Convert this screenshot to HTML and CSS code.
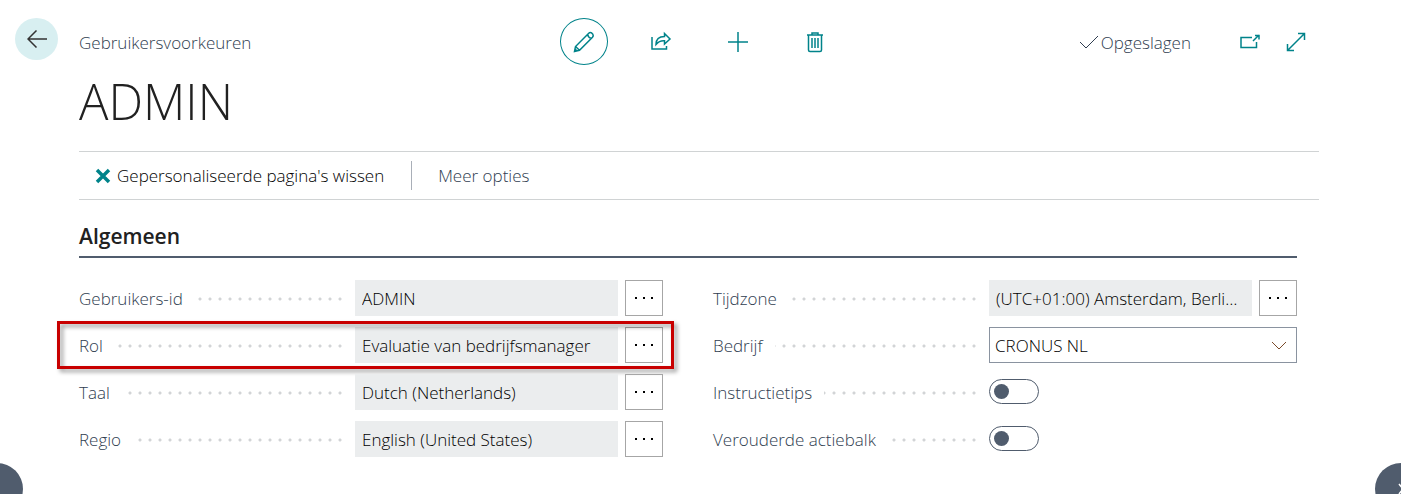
FILE: index.html
```html
<!DOCTYPE html>
<html lang="nl">
<head>
  <meta charset="utf-8">
  <meta name="viewport" content="width=device-width, initial-scale=1">
  <title>Gebruikersvoorkeuren - ADMIN</title>
  <link rel="stylesheet" href="styles.css">
</head>
<body>
  <button class="back" type="button" aria-label="Terug">
    <svg width="20" height="18" viewBox="0 0 20 18"><path d="M9.500 .5 L1 9 L9.500 17.500 M1 9 H20"/></svg>
  </button>

  <main class="page">
    <header class="topbar">
      <span class="caption">Gebruikersvoorkeuren</span>
      <div class="tools">
        <button class="tool tool-active" type="button" aria-label="Bewerken">
          <svg width="22" height="22" viewBox="0 0 22 22"><path d="M1.500 20.500 L2.500 15.500 L15.500 2.500 Q17 1 18.700 2 L19.800 3.200 Q20.800 4.800 19.500 6.300 L6.500 19.300 Z M2.500 15.500 L6.500 19.300 M14.500 3.500 Q15.500 7 18.500 7.300 M2 18 L4 20"/></svg>
        </button>
        <button class="tool" type="button" aria-label="Delen">
          <svg width="22" height="22" viewBox="0 0 22 22"><path d="M2 6 V18 H16.500 V15 M6 13.500 C6 8.500 9 5.500 14.500 5.500 V2.500 L20 8 L14.500 13 V9.800 C10.500 9.500 8.500 10.500 6 13.500 Z"/></svg>
        </button>
        <button class="tool" type="button" aria-label="Nieuw">
          <svg width="22" height="22" viewBox="0 0 22 22"><path d="M11 1 V21 M1 11 H21"/></svg>
        </button>
        <button class="tool" type="button" aria-label="Verwijderen">
          <svg width="18" height="22" viewBox="0 0 18 22"><path d="M1 4 H17 M6 4 V2 H12 V4 M2.500 4 V19 Q2.500 20.500 4 20.500 H14 Q15.500 20.500 15.500 19 V4 M6 7 V17 M9 7 V17 M12 7 V17"/></svg>
        </button>
      </div>
      <div class="status">
        <svg class="check" width="20" height="14" viewBox="0 0 20 14"><path d="M1 7 L7 13 L19 1"/></svg>
        <span class="saved">Opgeslagen</span>
        <button class="window-btn" type="button" aria-label="Openen in nieuw venster">
          <svg width="20" height="16" viewBox="0 0 20 16"><path d="M12 3.500 H1 V13.500 H16.500 V8 M13 7 L19 1 M15 1.500 H19 V5.500"/></svg>
        </button>
        <button class="window-btn" type="button" aria-label="Volledig scherm">
          <svg width="20" height="20" viewBox="0 0 20 20"><path d="M1.500 18.500 L18.500 1.500 M12 1.500 H18.500 V8 M1.500 12 V18.500 H8"/></svg>
        </button>
      </div>
    </header>

    <h1>ADMIN</h1>

    <div class="actions">
      <button class="action" type="button">
        <svg width="16" height="16" viewBox="0 0 16 16"><path d="M2 2 L14 14 M14 2 L2 14"/></svg>
        Gepersonaliseerde pagina's wissen
      </button>
      <button class="more" type="button">Meer opties</button>
    </div>

    <section class="group">
      <h2>Algemeen</h2>
      <div class="fields">
        <div class="column">
          <div class="row">
            <div class="name"><label for="user">Gebruikers-id</label></div>
            <input class="value" id="user" value="ADMIN" readonly>
            <button class="lookup" type="button" aria-label="Gebruikers-id opzoeken"><i></i><i></i><i></i></button>
          </div>
          <div class="row highlight">
            <div class="name"><label for="role">Rol</label></div>
            <input class="value" id="role" value="Evaluatie van bedrijfsmanager" readonly>
            <button class="lookup" type="button" aria-label="Rol opzoeken"><i></i><i></i><i></i></button>
          </div>
          <div class="row">
            <div class="name"><label for="language">Taal</label></div>
            <input class="value" id="language" value="Dutch (Netherlands)" readonly>
            <button class="lookup" type="button" aria-label="Taal opzoeken"><i></i><i></i><i></i></button>
          </div>
          <div class="row">
            <div class="name"><label for="region">Regio</label></div>
            <input class="value" id="region" value="English (United States)" readonly>
            <button class="lookup" type="button" aria-label="Regio opzoeken"><i></i><i></i><i></i></button>
          </div>
        </div>
        <div class="column">
          <div class="row">
            <div class="name"><label for="timezone">Tijdzone</label></div>
            <input class="value" id="timezone" value="(UTC+01:00) Amsterdam, Berlijn, Bern, Rome" readonly>
            <button class="lookup" type="button" aria-label="Tijdzone opzoeken"><i></i><i></i><i></i></button>
          </div>
          <div class="row">
            <div class="name"><label for="company">Bedrijf</label></div>
            <div class="picker">
              <select id="company"><option>CRONUS NL</option></select>
              <svg width="16" height="10" viewBox="0 0 16 10"><path d="M1 1 L8 8 L15 1"/></svg>
            </div>
          </div>
          <div class="row">
            <div class="name"><label for="tips">Instructietips</label></div>
            <input class="toggle" id="tips" type="checkbox">
          </div>
          <div class="row">
            <div class="name"><label for="legacy">Verouderde actiebalk</label></div>
            <input class="toggle" id="legacy" type="checkbox">
          </div>
        </div>
      </div>
    </section>
  </main>

  <button class="pager pager-prev" type="button" aria-label="Vorige"></button>
  <button class="pager pager-next" type="button" aria-label="Volgende">
    <svg width="6" height="12" viewBox="0 0 6 12"><path d="M1 1 L5 6 L1 11"/></svg>
  </button>
</body>
</html>
```
FILE: styles.css
```css
* { box-sizing: border-box; }

body {
  margin: 0;
  background: #fff;
  color: #000;
  font: 300 17px/24px "Open Sans", "Noto Sans", sans-serif;
}

button, input, select { font: inherit; color: inherit; }
button { padding: 0; border: 0; background: none; cursor: pointer; }
svg { display: block; fill: none; stroke: currentColor; stroke-width: 1.5; }

.back {
  position: absolute;
  top: 18px;
  left: 15px;
  display: flex;
  align-items: center;
  justify-content: center;
  width: 43px;
  height: 42px;
  border-radius: 50%;
  background: #d8eff1;
  color: #333;
}

.page { padding: 18px 82px 38px 79px; }

/* top bar */
.topbar {
  display: grid;
  grid-template-columns: 1fr auto 1fr;
  align-items: center;
  color: #2f3d50;
}
.caption { padding-top: 2px; }
.tools { display: flex; gap: 29px; color: #00838a; }
.tool {
  display: flex;
  align-items: center;
  justify-content: center;
  width: 48px;
  height: 47px;
  border-radius: 50%;
}
.tool-active { border: 1px solid #00838a; }
.status { display: flex; align-items: center; justify-content: flex-end; }
.check { margin-right: 2px; stroke-width: 1; }
.saved { margin-right: 36px; padding-top: 2px; }
.window-btn {
  display: flex;
  align-items: center;
  justify-content: center;
  width: 46px;
  height: 46px;
  color: #00838a;
}

h1 {
  margin: 4px 0 18px;
  color: #212121;
  font-size: 49px;
  font-weight: 300;
  line-height: 64px;
}

/* action bar */
.actions {
  display: flex;
  align-items: center;
  height: 49px;
  padding-left: 16px;
  border-top: 1px solid #d0d3d4;
  border-bottom: 1px solid #d0d3d4;
}
.action {
  display: flex;
  align-items: center;
  gap: 6px;
  padding-right: 27px;
}
.action svg { color: #00838a; stroke-width: 3.500; }
.more {
  height: 29px;
  padding-left: 26px;
  border-left: 1px solid #a9afb8;
  color: #2f3d50;
}

.group { padding-right: 22px; }
h2 {
  margin: 0;
  padding: 21px 0 5px;
  border-bottom: 2px solid #505c6d;
  color: #212121;
  font-size: 21px;
  font-weight: 600;
  line-height: 30px;
}

/* fields */
.fields {
  display: grid;
  grid-template-columns: 1fr 1fr;
  gap: 50px;
  padding-top: 22px;
}
.column { display: grid; gap: 11px; }
.row {
  position: relative;
  display: flex;
  align-items: center;
  height: 36px;
}
.name {
  flex: none;
  width: 276px;
  padding: 2px 10px 0 0;
  color: #2f3d50;
  background: radial-gradient(circle, #d2d4d6 1px, transparent 2px) right center / 10px 10px repeat-x content-box;
}
.name label { display: inline-block; padding-right: 12px; background: #fff; }
.value {
  flex: 1;
  min-width: 0;
  height: 36px;
  padding: 0 13px 0 7px;
  border: 0;
  background: #ebedee;
  text-overflow: ellipsis;
}
.lookup {
  display: flex;
  align-items: center;
  justify-content: center;
  gap: 6px;
  width: 38px;
  height: 36px;
  margin-left: 7px;
  border: 1px solid #a6a6a6;
}
.lookup i { width: 2px; height: 2px; background: #000; }

.picker { position: relative; flex: 1; }
.picker select {
  display: block;
  width: 100%;
  height: 36px;
  padding: 2px 5px 0;
  border: 1px solid #8a93a0;
  border-radius: 0;
  background: #fff;
  appearance: none;
}
.picker svg {
  position: absolute;
  top: 14px;
  right: 10px;
  color: #7a4a2a;
  stroke-width: 1;
  pointer-events: none;
}

.toggle {
  display: flex;
  align-items: center;
  width: 50px;
  height: 25px;
  margin: 0 0 2px;
  padding: 0 4px;
  border: 1px solid #505c6d;
  border-radius: 13px;
  appearance: none;
}
.toggle::before {
  content: "";
  width: 15px;
  height: 15px;
  border-radius: 50%;
  background: #505c6d;
}
.toggle:checked { justify-content: flex-end; }

/* red frame round the role field */
.highlight::after {
  content: "";
  position: absolute;
  inset: -6px -11px -6px -22px;
  border: 3px solid #c80000;
  filter: drop-shadow(3px 3px 2px rgba(0, 0, 0, 0.4));
  pointer-events: none;
}

/* page turners at the window's lower corners */
.pager {
  position: fixed;
  bottom: -21px;
  display: flex;
  align-items: center;
  justify-content: center;
  width: 52px;
  height: 52px;
  border-radius: 50%;
  background: #505c6d;
  color: #fff;
}
.pager-prev { left: -29px; }
.pager-next { right: -26px; }
```
